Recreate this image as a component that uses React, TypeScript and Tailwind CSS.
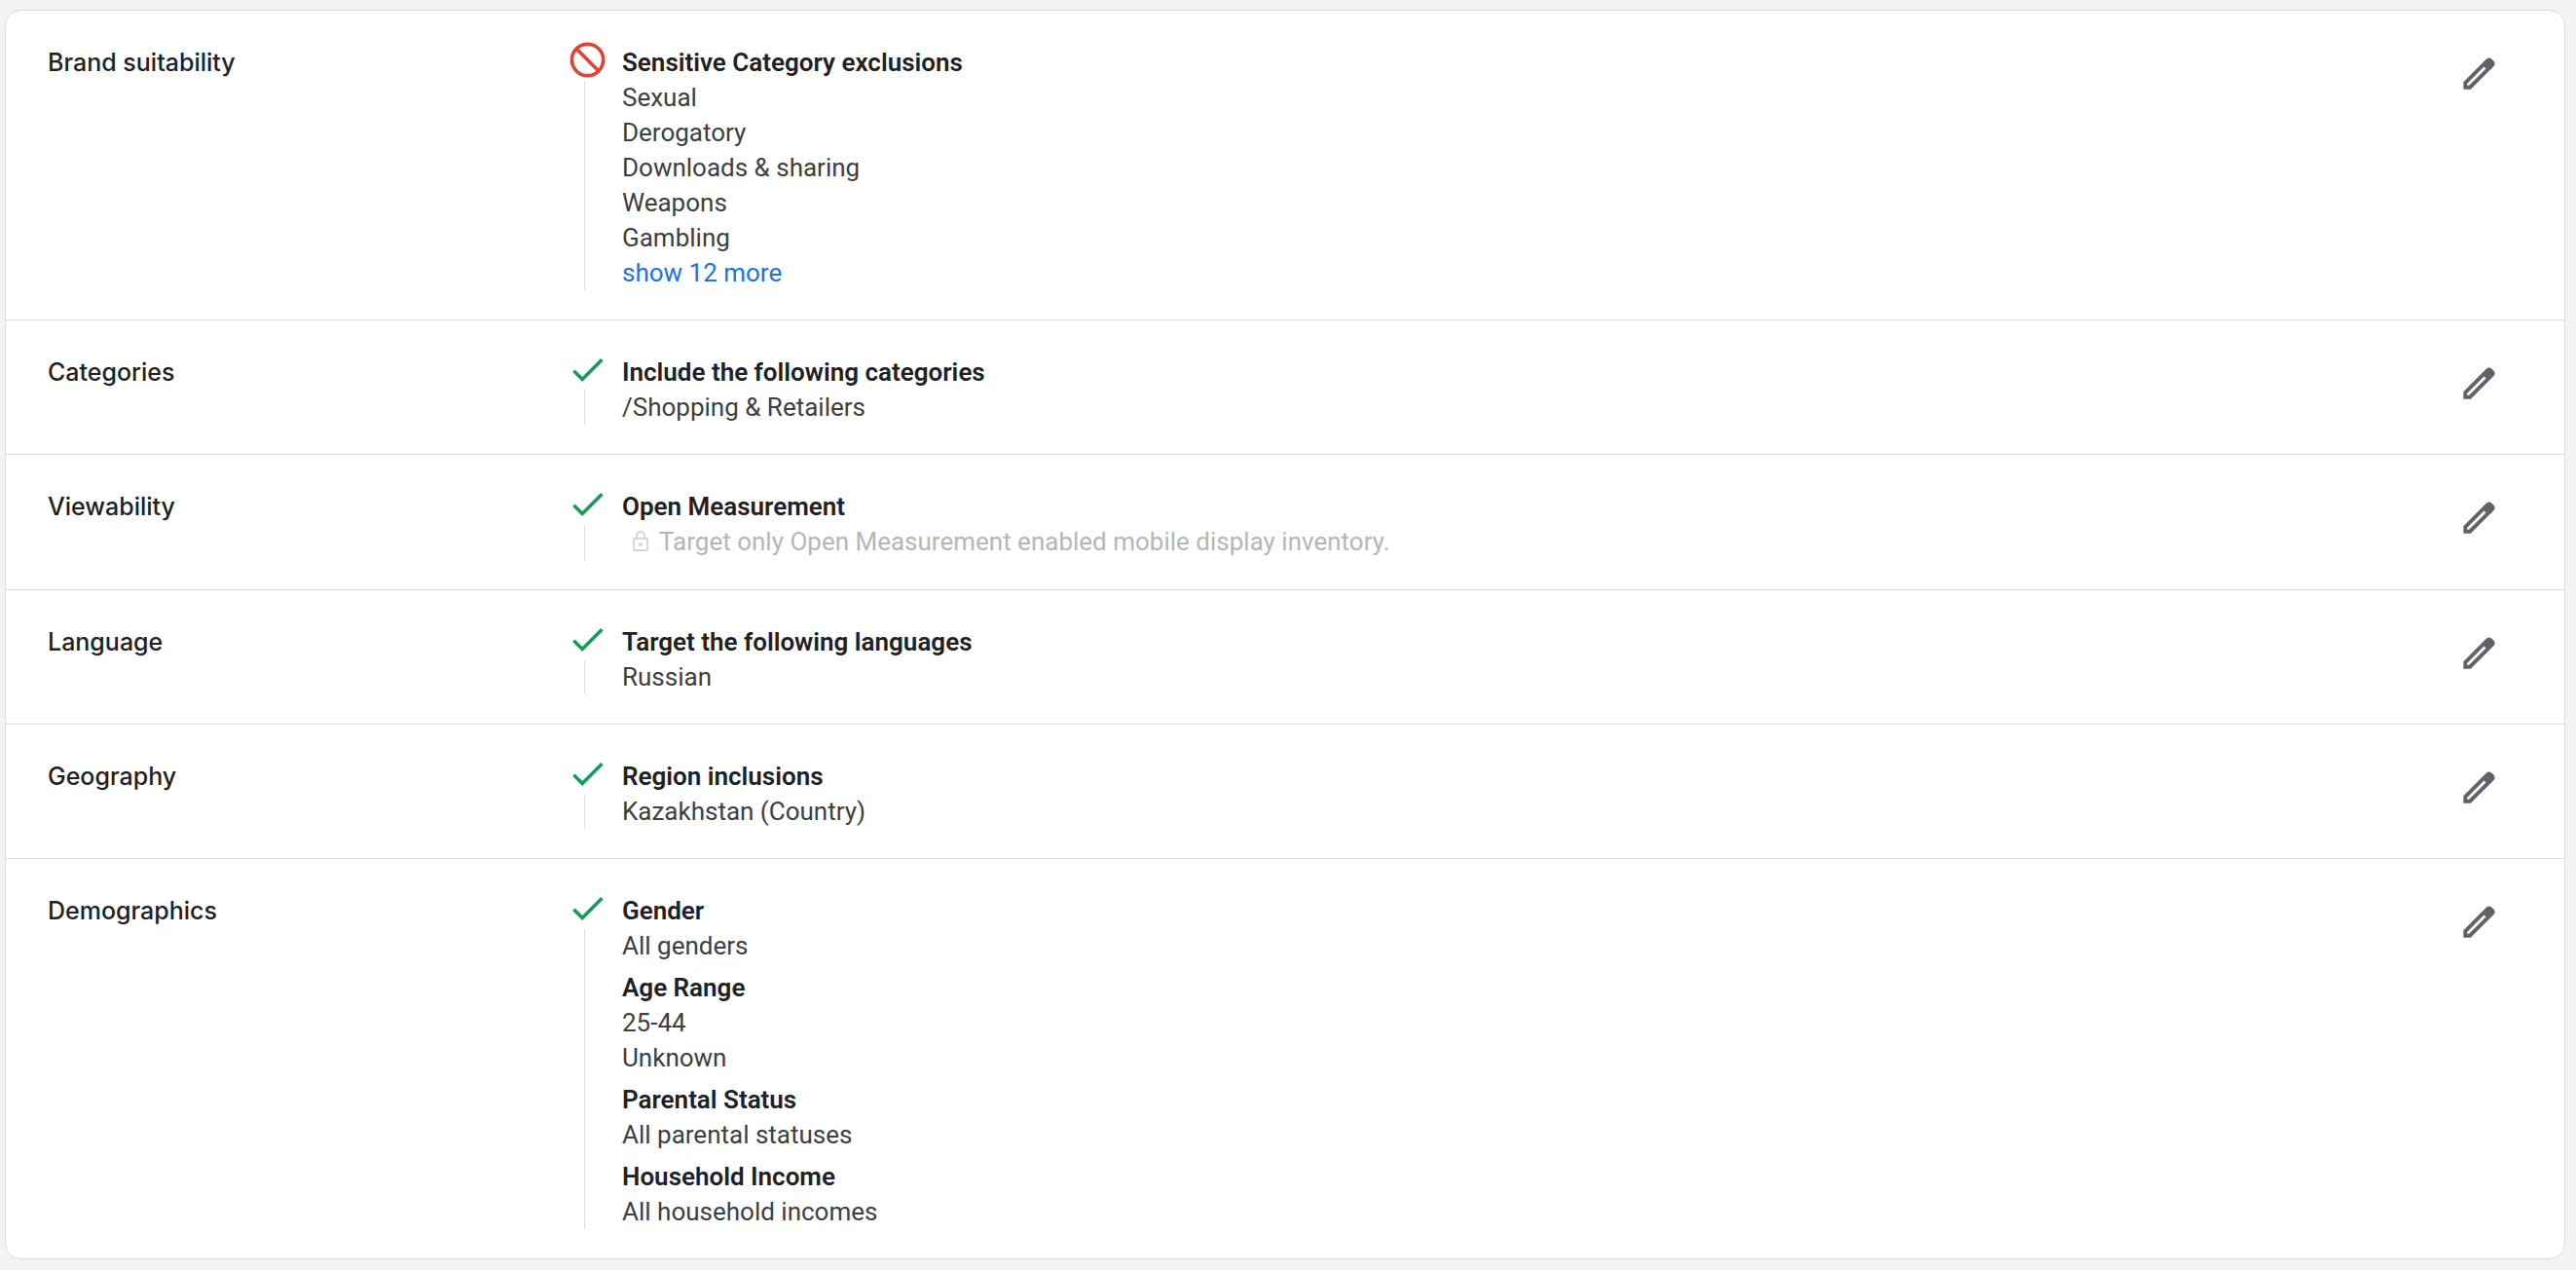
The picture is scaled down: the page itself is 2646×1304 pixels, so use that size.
import type { ReactNode } from "react";

type Group = { title: string; items: string[]; locked?: boolean; more?: string };

type Section = { label: string; excluded?: boolean; groups: Group[] };

const sections: Section[] = [
    {
        label: "Brand suitability",
        excluded: true,
        groups: [
            {
                title: "Sensitive Category exclusions",
                items: ["Sexual", "Derogatory", "Downloads & sharing", "Weapons", "Gambling"],
                more: "show 12 more",
            },
        ],
    },
    {
        label: "Categories",
        groups: [{ title: "Include the following categories", items: ["/Shopping & Retailers"] }],
    },
    {
        label: "Viewability",
        groups: [
            {
                title: "Open Measurement",
                items: ["Target only Open Measurement enabled mobile display inventory."],
                locked: true,
            },
        ],
    },
    {
        label: "Language",
        groups: [{ title: "Target the following languages", items: ["Russian"] }],
    },
    {
        label: "Geography",
        groups: [{ title: "Region inclusions", items: ["Kazakhstan (Country)"] }],
    },
    {
        label: "Demographics",
        groups: [
            { title: "Gender", items: ["All genders"] },
            { title: "Age Range", items: ["25-44", "Unknown"] },
            { title: "Parental Status", items: ["All parental statuses"] },
            { title: "Household Income", items: ["All household incomes"] },
        ],
    },
];

function Icon({ className, children }: { className: string; children: ReactNode }) {
    return (
        <svg viewBox="0 0 24 24" fill="currentColor" aria-hidden="true" className={className}>
            {children}
        </svg>
    );
}

function StatusIcon({ excluded }: { excluded?: boolean }) {
    if (excluded) {
        return (
            <Icon className="-mt-1.5 size-[43px] text-[#db4437]">
                <g fill="none" stroke="currentColor" strokeWidth="2">
                    <circle cx="12" cy="12" r="9" />
                    <path d="M5.2 5.2l13.6 13.6" />
                </g>
            </Icon>
        );
    }
    return (
        <Icon className="-mt-1.5 size-[43px] text-[#0f9d58]">
            <path d="M9 16.17L4.83 12l-1.42 1.41L9 19 21 7l-1.41-1.41z" />
        </Icon>
    );
}

function LockIcon() {
    return (
        <Icon className="size-6 text-[#d5d6d7]">
            <path d="M18 8h-1V6c0-2.76-2.24-5-5-5S7 3.24 7 6v2H6c-1.1 0-2 .9-2 2v10c0 1.1.9 2 2 2h12c1.1 0 2-.9 2-2V10c0-1.1-.9-2-2-2zM9 6c0-1.66 1.34-3 3-3s3 1.34 3 3v2H9V6zm9 14H6V10h12v10zm-6-3c1.1 0 2-.9 2-2s-.9-2-2-2-2 .9-2 2 .9 2 2 2z" />
        </Icon>
    );
}

function PencilIcon() {
    return (
        <Icon className="size-[43px]">
            <path d="M20.41 4.94l-1.35-1.35c-.78-.78-2.05-.78-2.83 0L3 16.82V21h4.18L20.41 7.77c.79-.78.79-2.05 0-2.83zM6.2 18.9L5.1 18.9v-1.1l9.7-9.7 1.1 1.1-9.7 9.7z" />
        </Icon>
    );
}

function SectionRow({ label, excluded, groups }: Section) {
    return (
        <section className="grid grid-cols-[533px_43px_1fr_auto] border-b border-[#dadce0] pt-[35px] pr-[66px] pb-[30px] pl-[43px] last:border-b-0">
            <h2 className="text-[25px] leading-9 font-medium text-[#202124]">{label}</h2>
            <div className="flex flex-col">
                <StatusIcon excluded={excluded} />
                <div className="ml-[18px] w-px grow bg-[#dadce0]" />
            </div>
            <div className="flex flex-col gap-[7px] pl-[14px] font-[Roboto,sans-serif] text-[26px] leading-9">
                {groups.map((group) => (
                    <div key={group.title}>
                        <h3 className="font-semibold text-[#202124]">{group.title}</h3>
                        <ul>
                            {group.items.map((item) =>
                                group.locked ? (
                                    <li key={item} className="flex min-h-[37px] items-start gap-[7px] pl-[7px] text-[#b5b6b7]">
                                        <span className="flex h-9 items-center">
                                            <LockIcon />
                                        </span>
                                        {item}
                                    </li>
                                ) : (
                                    <li key={item} className="text-[#3c4043]">{item}</li>
                                ),
                            )}
                        </ul>
                        {group.more && (
                            <button type="button" className="block text-[#1a73e8]">
                                {group.more}
                            </button>
                        )}
                    </div>
                ))}
            </div>
            <button type="button" aria-label={`Edit ${label}`} className="mt-2 self-start text-[#5f6368]">
                <PencilIcon />
            </button>
        </section>
    );
}

export default function App() {
    return (
        <main className="min-h-screen bg-[#f1f3f4] pt-2.5 pr-[11px] pb-[11px] pl-[5px] font-[Inter,sans-serif]">
            <div className="rounded-2xl border border-[#dadce0] bg-white">
                {sections.map((section) => (
                    <SectionRow key={section.label} {...section} />
                ))}
            </div>
        </main>
    );
}
